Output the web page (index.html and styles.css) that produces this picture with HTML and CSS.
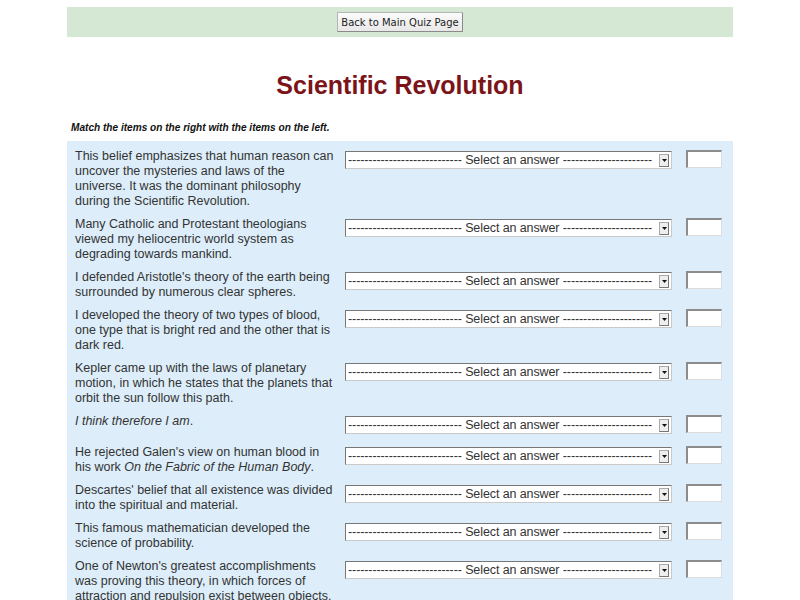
FILE: index.html
```html
<!DOCTYPE html>
<html>
<head>
<meta charset="utf-8">
<title>Scientific Revolution</title>
<link rel="stylesheet" href="styles.css">
</head>
<body>
<div class="page">
  <div class="topbar"><button class="back">Back to Main Quiz Page</button></div>
  <h1 class="title">Scientific Revolution</h1>
  <p class="instr">Match the items on the right with the items on the left.</p>
  <div class="quiz">
    <div class="row">
      <div class="q">This belief emphasizes that human reason can uncover the mysteries and laws of the universe. It was the dominant philosophy during the Scientific Revolution.</div>
      <div class="sel"><span class="opt">---------------------------- Select an answer ----------------------</span><span class="arrow"><svg width="5" height="3" viewBox="0 0 5 3"><path d="M0 0H5L2.5 3Z" fill="#111"/></svg></span></div>
      <div class="box"></div>
    </div>
    <div class="row">
      <div class="q">Many Catholic and Protestant theologians viewed my heliocentric world system as degrading towards mankind.</div>
      <div class="sel"><span class="opt">---------------------------- Select an answer ----------------------</span><span class="arrow"><svg width="5" height="3" viewBox="0 0 5 3"><path d="M0 0H5L2.5 3Z" fill="#111"/></svg></span></div>
      <div class="box"></div>
    </div>
    <div class="row">
      <div class="q">I defended Aristotle's theory of the earth being surrounded by numerous clear spheres.</div>
      <div class="sel"><span class="opt">---------------------------- Select an answer ----------------------</span><span class="arrow"><svg width="5" height="3" viewBox="0 0 5 3"><path d="M0 0H5L2.5 3Z" fill="#111"/></svg></span></div>
      <div class="box"></div>
    </div>
    <div class="row">
      <div class="q">I developed the theory of two types of blood, one type that is bright red and the other that is dark red.</div>
      <div class="sel"><span class="opt">---------------------------- Select an answer ----------------------</span><span class="arrow"><svg width="5" height="3" viewBox="0 0 5 3"><path d="M0 0H5L2.5 3Z" fill="#111"/></svg></span></div>
      <div class="box"></div>
    </div>
    <div class="row">
      <div class="q">Kepler came up with the laws of planetary motion, in which he states that the planets that orbit the sun follow this path.</div>
      <div class="sel"><span class="opt">---------------------------- Select an answer ----------------------</span><span class="arrow"><svg width="5" height="3" viewBox="0 0 5 3"><path d="M0 0H5L2.5 3Z" fill="#111"/></svg></span></div>
      <div class="box"></div>
    </div>
    <div class="row">
      <div class="q"><em>I think therefore I am</em>.</div>
      <div class="sel"><span class="opt">---------------------------- Select an answer ----------------------</span><span class="arrow"><svg width="5" height="3" viewBox="0 0 5 3"><path d="M0 0H5L2.5 3Z" fill="#111"/></svg></span></div>
      <div class="box"></div>
    </div>
    <div class="row">
      <div class="q">He rejected Galen's view on human blood in his work <em>On the Fabric of the Human Body</em>.</div>
      <div class="sel"><span class="opt">---------------------------- Select an answer ----------------------</span><span class="arrow"><svg width="5" height="3" viewBox="0 0 5 3"><path d="M0 0H5L2.5 3Z" fill="#111"/></svg></span></div>
      <div class="box"></div>
    </div>
    <div class="row">
      <div class="q">Descartes' belief that all existence was divided into the spiritual and material.</div>
      <div class="sel"><span class="opt">---------------------------- Select an answer ----------------------</span><span class="arrow"><svg width="5" height="3" viewBox="0 0 5 3"><path d="M0 0H5L2.5 3Z" fill="#111"/></svg></span></div>
      <div class="box"></div>
    </div>
    <div class="row">
      <div class="q">This famous mathematician developed the science of probability.</div>
      <div class="sel"><span class="opt">---------------------------- Select an answer ----------------------</span><span class="arrow"><svg width="5" height="3" viewBox="0 0 5 3"><path d="M0 0H5L2.5 3Z" fill="#111"/></svg></span></div>
      <div class="box"></div>
    </div>
    <div class="row">
      <div class="q">One of Newton's greatest accomplishments was proving this theory, in which forces of attraction and repulsion exist between objects.</div>
      <div class="sel"><span class="opt">---------------------------- Select an answer ----------------------</span><span class="arrow"><svg width="5" height="3" viewBox="0 0 5 3"><path d="M0 0H5L2.5 3Z" fill="#111"/></svg></span></div>
      <div class="box"></div>
    </div>
  </div>
</div>
</body>
</html>
```
FILE: styles.css
```css
html, body {
  margin: 0;
  padding: 0;
  background: #fff;
}
body {
  font-family: "Liberation Sans", Arial, sans-serif;
  color: #333;
}
.page {
  width: 666px;
  margin: 0 auto;
  padding-top: 7px;
}
.topbar {
  height: 30px;
  background: #d5e8d4;
  display: flex;
  align-items: center;
  justify-content: center;
}
.back {
  font-family: "DejaVu Sans", sans-serif;
  font-size: 10px;
  color: #222;
  height: 20px;
  width: 126px;
  padding: 0;
  background: linear-gradient(#fbfbfb, #e8e8e8);
  border: 1px solid #b5b5b5;
  border-right-color: #8a8a8a;
  border-bottom-color: #8a8a8a;
  border-radius: 1px;
}
.title {
  margin: 33px 0 0;
  font-size: 25px;
  line-height: 30px;
  font-weight: bold;
  text-align: center;
  color: #7b1418;
}
.instr {
  margin: 22px 0 0;
  padding-left: 4px;
  font-size: 10.1px;
  line-height: 12px;
  font-weight: bold;
  font-style: italic;
  color: #111;
}
.quiz {
  margin-top: 7px;
  background: #ddeefa;
  padding: 8px 0 8px 8px;
  display: flex;
  flex-direction: column;
  gap: 8px;
}
.row {
  display: grid;
  grid-template-columns: 262px 327px 36px;
  column-gap: 8px;
  align-items: start;
  min-height: 23px;
}
.q {
  font-size: 12.5px;
  line-height: 15px;
}
.sel {
  margin-top: 2px;
  height: 18px;
  box-sizing: border-box;
  background: #fff;
  border: 1px solid #c9c9c9;
  border-top-color: #777;
  border-left-color: #777;
  display: flex;
  align-items: center;
  position: relative;
  overflow: hidden;
  font-size: 12.5px;
  padding-left: 2px;
}
.opt {
  white-space: nowrap;
  letter-spacing: -0.1px;
}
.arrow {
  position: absolute;
  right: 2px;
  top: 2px;
  width: 8px;
  height: 11px;
  background: #eee;
  border: 1px solid #aaa;
  border-right-color: #777;
  border-bottom-color: #777;
  display: flex;
  align-items: center;
  justify-content: center;
}
.box {
  margin-left: 6px;
  width: 36px;
  height: 18px;
  margin-top: 1px;
  box-sizing: border-box;
  background: #fff;
  border: 1px solid #dcdcdc;
  border-top: 2px solid #8c8c8c;
  border-left: 2px solid #8c8c8c;
}
```
